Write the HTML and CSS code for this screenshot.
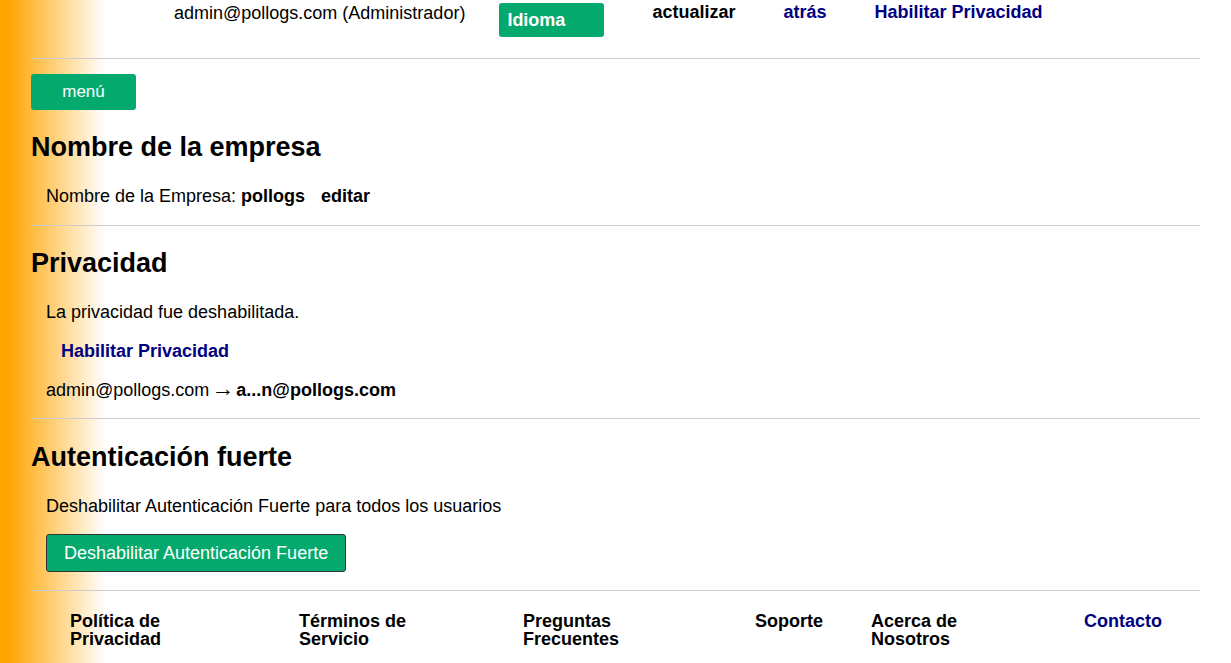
FILE: index.html
```html
<!DOCTYPE html>
<html lang="es">
<head>
    <meta charset="UTF-8">
    <meta name="viewport" content="width=device-width, initial-scale=1.0">
    <title>Configuración de la empresa</title>
    <link rel="stylesheet" href="styles.css">
</head>
<body>
    <div class="topbar">
        <span class="user">admin@pollogs.com (Administrador)</span>
        <span class="lang-btn">Idioma</span>
        <nav class="top-links">
            <a class="plain" href="#">actualizar</a>
            <a href="#">atrás</a>
            <a href="#">Habilitar Privacidad</a>
        </nav>
    </div>

    <button class="menu-btn">menú</button>

    <section class="block">
        <h2>Nombre de la empresa</h2>
        <p class="first">Nombre de la Empresa: <b>pollogs</b> <b class="edit">editar</b></p>
    </section>

    <section class="block privacy">
        <h2>Privacidad</h2>
        <p class="first">La privacidad fue deshabilitada.</p>
        <p><a class="indent" href="#">Habilitar Privacidad</a></p>
        <p>admin@pollogs.com<span class="arrow">&rarr;</span><b>a...n@pollogs.com</b></p>
    </section>

    <section class="block">
        <h2 class="tight">Autenticación fuerte</h2>
        <p class="first">Deshabilitar Autenticación Fuerte para todos los usuarios</p>
        <button class="action-btn">Deshabilitar Autenticación Fuerte</button>
    </section>

    <footer class="footer">
        <a class="plain" href="#">Política de Privacidad</a>
        <a class="plain" href="#">Términos de Servicio</a>
        <a class="plain" href="#">Preguntas Frecuentes</a>
        <a class="plain" href="#">Soporte</a>
        <a class="plain" href="#">Acerca de Nosotros</a>
        <a href="#">Contacto</a>
    </footer>
</body>
</html>
```

FILE: styles.css
```css
html {
    height: 100%;
}
body {
    margin: 0;
    padding: 0 31px;
    min-height: 100%;
    font-family: "Liberation Sans", Arial, sans-serif;
    font-size: 18px;
    color: #000;
    background: linear-gradient(to right, #ffa500 0, #ffa500 8px, #fff 105px) fixed;
}
a {
    color: #000080;
    font-weight: bold;
    text-decoration: none;
}
a.plain {
    color: #000;
}

.topbar {
    display: flex;
    align-items: flex-start;
    height: 59px;
    box-sizing: border-box;
    padding: 3px 0 0 143px;
    border-bottom: 1px solid #ccc;
}
.user {
    line-height: 20px;
    margin-right: 34px;
}
.lang-btn {
    width: 105px;
    height: 34px;
    box-sizing: border-box;
    padding: 0 8px;
    line-height: 34px;
    font-weight: bold;
    color: #fff;
    background-color: #04aa6d;
    border-radius: 3px;
}
.top-links {
    display: flex;
    gap: 48px;
    margin-left: 48px;
    line-height: 18px;
}

.menu-btn {
    display: block;
    width: 105px;
    height: 36px;
    margin-top: 15px;
    border: none;
    border-radius: 3px;
    background-color: #04aa6d;
    color: #fff;
    font-family: inherit;
    font-size: 17px;
}

.block {
    border-bottom: 1px solid #ccc;
    padding-bottom: 19px;
}
.block.privacy {
    padding-bottom: 18px;
}
.block h2 {
    margin: 22px 0 0;
    font-size: 27px;
    line-height: 30px;
}
.block h2.tight {
    margin-top: 23px;
}
.block p {
    margin: 19px 0 0 15px;
    line-height: 20px;
}
.block p.first {
    margin-top: 24px;
}
.edit {
    margin-left: 11px;
}
.indent {
    margin-left: 15px;
}
.arrow {
    font-size: 23px;
    line-height: 0;
    margin: 0 2px;
}
.action-btn {
    display: block;
    margin: 18px 0 -1px 15px;
    height: 38px;
    padding: 0 17px;
    border: 1px solid #333;
    border-radius: 3px;
    background-color: #04aa6d;
    color: #fff;
    font-family: inherit;
    font-size: 18px;
}

.footer {
    display: grid;
    grid-template-columns: 229px 224px 232px 116px 213px auto;
    padding: 21px 0 0 39px;
    line-height: 18px;
}
.footer a {
    max-width: 130px;
}
```
